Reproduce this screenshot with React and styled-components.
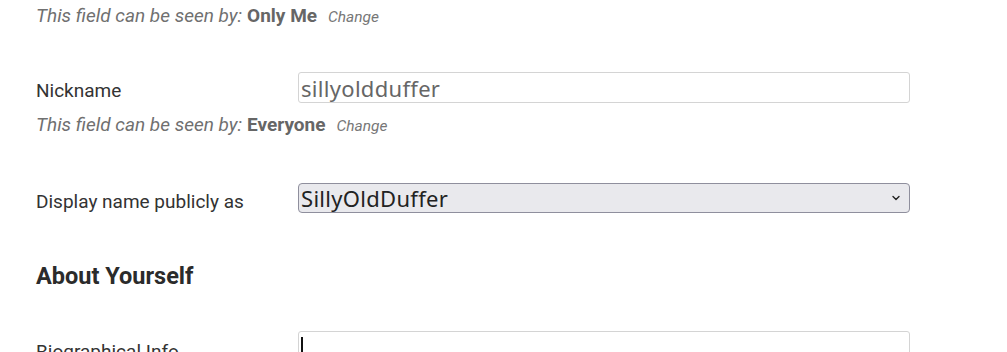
import React from 'react';
import styled, { createGlobalStyle } from 'styled-components';

const GlobalStyle = createGlobalStyle`
  body {
    margin: 0;
    background: #ffffff;
    font-family: Roboto, "Liberation Sans", sans-serif;
  }
`;

const Page = styled.div`
  display: flex;
  flex-flow: column nowrap;
  padding: 4px 0 0 36px;
  height: 352px;
  overflow: hidden;
  box-sizing: border-box;
`;

const Hint = styled.div`
  display: flex;
  align-items: baseline;
  height: 22px;
  font-size: 19px;
  font-style: italic;
  color: #707070;
  margin-top: ${(props) => props.top || 0}px;
`;

const Who = styled.b`
  font-style: normal;
  font-weight: 700;
  color: #666;
  margin-left: 5px;
`;

const ChangeLink = styled.span`
  font-size: 15.5px;
  color: #777;
  margin-left: 11px;
`;

const Row = styled.div`
  display: flex;
  flex-flow: row nowrap;
  align-items: ${(props) => (props.$topAlign ? 'flex-start' : 'center')};
  margin-top: ${(props) => props.top || 0}px;
`;

const Label = styled.label`
  width: 262px;
  flex: none;
  font-size: 19px;
  color: #333;
  padding-top: ${(props) => props.drop || 4}px;
`;

const TextInput = styled.input`
  width: 612px;
  height: 31px;
  box-sizing: border-box;
  border: 1px solid #d4d4d4;
  border-radius: 3px;
  padding: 0 2px;
  font-family: "Noto Sans", "Open Sans", sans-serif;
  font-size: 22px;
  letter-spacing: 0.3px;
  color: #666;
  background: #fff;
`;

const Select = styled.div`
  width: 612px;
  height: 30px;
  box-sizing: border-box;
  display: flex;
  align-items: center;
  justify-content: space-between;
  border: 1px solid #8f8f9d;
  border-radius: 4px;
  padding: 0 8px 0 2px;
  background: #e9e9ed;
  font-family: "Noto Sans", "Open Sans", sans-serif;
  font-size: 22px;
  letter-spacing: 0.3px;
  color: #222;
`;

const Heading = styled.h3`
  margin: 0;
  margin-top: 49px;
  font-size: 23.5px;
  font-weight: 700;
  color: #2b2b2b;
`;

const Area = styled.div`
  position: relative;
  width: 612px;
  height: 80px;
  box-sizing: border-box;
  border: 1px solid #d4d4d4;
  border-radius: 3px;
  background: #fff;
`;

const Caret = styled.span`
  position: absolute;
  left: 2px;
  top: 5px;
  width: 2px;
  height: 17px;
  background: #111;
`;

function Chevron() {
  return (
    <svg width="10" height="10" viewBox="0 0 10 10" fill="none">
      <path d="M2 3.5 L5 6.5 L8 3.5" stroke="#222" strokeWidth="1.4" strokeLinecap="round" strokeLinejoin="round" />
    </svg>
  );
}

const Visibility = ({ who, top }) => (
  <Hint top={top}>
    This field can be seen by:<Who>{who}</Who>
    <ChangeLink>Change</ChangeLink>
  </Hint>
);

export default function App() {
  return (
    <>
      <GlobalStyle />
      <Page>
        <Visibility who="Only Me" />
        <Row top={46}>
          <Label drop={6}>Nickname</Label>
          <TextInput defaultValue="sillyoldduffer" readOnly />
        </Row>
        <Visibility who="Everyone" top={10} />
        <Row top={48}>
          <Label drop={6}>Display name publicly as</Label>
          <Select>
            <span>SillyOldDuffer</span>
            <Chevron />
          </Select>
        </Row>
        <Heading>About Yourself</Heading>
        <Row top={41} $topAlign>
          <Label drop={9}>Biographical Info</Label>
          <Area>
            <Caret />
          </Area>
        </Row>
      </Page>
    </>
  );
}
